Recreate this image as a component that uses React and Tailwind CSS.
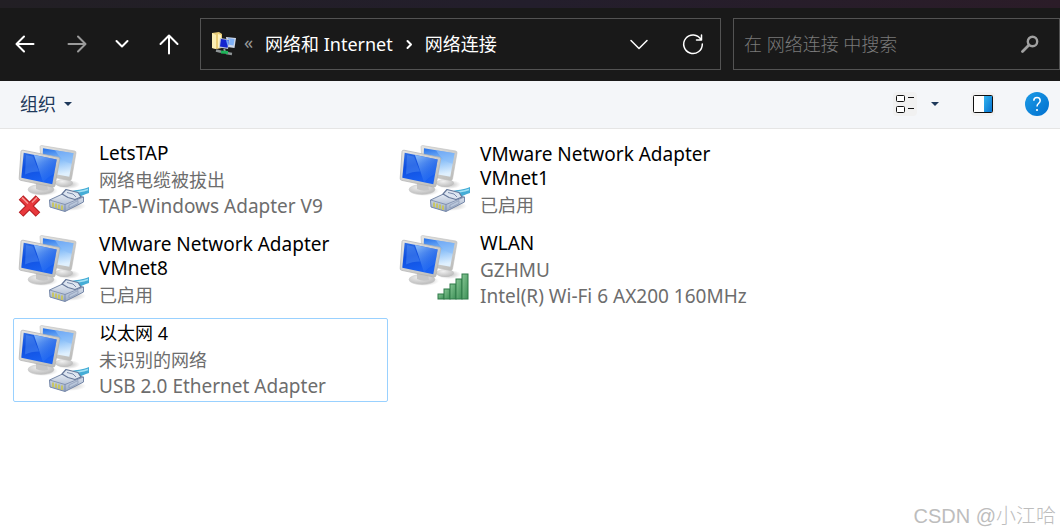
import { useState } from "react";

const connections = [
  { name: "LetsTAP", lines: ["网络电缆被拔出", "TAP-Windows Adapter V9"], badge: "cable", unplugged: true },
  { name: "VMware Network Adapter VMnet1", lines: ["已启用"], badge: "cable" },
  { name: "VMware Network Adapter VMnet8", lines: ["已启用"], badge: "cable" },
  { name: "WLAN", lines: ["GZHMU", "Intel(R) Wi-Fi 6 AX200 160MHz"], badge: "signal" },
  { name: "以太网 4", lines: ["未识别的网络", "USB 2.0 Ethernet Adapter"], badge: "cable" },
];

// Latin-only lines are set one pixel larger so they sit evenly beside the Chinese ones
const textSize = (text) => (/[\u4e00-\u9fff]/.test(text) ? "text-[18px]" : "text-[19px]");

// Gradients shared by every connection icon
function IconDefs() {
  return (
    <svg width="0" height="0" className="absolute" aria-hidden="true">
      <defs>
        <linearGradient id="screen" x1="0" y1="0" x2="0.3" y2="1">
          <stop offset="0" stopColor="#2f6fe6" />
          <stop offset="0.45" stopColor="#0f4fe0" />
          <stop offset="1" stopColor="#1a62f2" />
        </linearGradient>
        <linearGradient id="screenBack" x1="0" y1="0" x2="0.2" y2="1">
          <stop offset="0" stopColor="#2470ea" />
          <stop offset="0.5" stopColor="#86bdf8" />
          <stop offset="1" stopColor="#dff0fe" />
        </linearGradient>
        <linearGradient id="shine" x1="0" y1="0" x2="0.6" y2="1">
          <stop offset="0" stopColor="#9ccbfc" stopOpacity="0.9" />
          <stop offset="1" stopColor="#3f86f5" stopOpacity="0.1" />
        </linearGradient>
        <linearGradient id="frame" x1="0" y1="0" x2="1" y2="1">
          <stop offset="0" stopColor="#e6e6e4" />
          <stop offset="1" stopColor="#b9b9b7" />
        </linearGradient>
        <radialGradient id="base" cx="0.4" cy="0.3" r="0.8">
          <stop offset="0" stopColor="#f0f0f0" />
          <stop offset="1" stopColor="#b4b4b4" />
        </radialGradient>
        <radialGradient id="shadow">
          <stop offset="0" stopColor="#8a8a8a" stopOpacity="0.6" />
          <stop offset="1" stopColor="#8a8a8a" stopOpacity="0" />
        </radialGradient>
        <linearGradient id="bar" x1="0" y1="0" x2="1" y2="1">
          <stop offset="0" stopColor="#86c694" />
          <stop offset="1" stopColor="#3c8f56" />
        </linearGradient>
        <linearGradient id="plug" x1="0" y1="0" x2="0" y2="1">
          <stop offset="0" stopColor="#e6ecf5" />
          <stop offset="1" stopColor="#98a8c2" />
        </linearGradient>
        <linearGradient id="help" x1="0" y1="0" x2="1" y2="1">
          <stop offset="0" stopColor="#1c9be6" />
          <stop offset="1" stopColor="#0070cf" />
        </linearGradient>
        <linearGradient id="pane" x1="0" y1="0" x2="1" y2="1">
          <stop offset="0" stopColor="#33b4ef" />
          <stop offset="1" stopColor="#0672cf" />
        </linearGradient>
      </defs>
    </svg>
  );
}

function Cable() {
  return (
    <g strokeLinejoin="round">
      <ellipse cx="52" cy="63" rx="17" ry="5" fill="url(#shadow)" />
      <path d="M54 48.500c5-2.500 11-1 18-4.500v6c-4 1-8 3-12 5z" fill="#45add6" />
      <path d="M57 49.500c5-1 9-1 14-3" stroke="#a5e2f5" strokeWidth="1.500" fill="none" />
      <path d="M32.500 57l13-6 21 3v5l-18.500 9.500-15-4.500z" fill="url(#plug)" stroke="#7587a8" strokeWidth="1" />
      <path d="M32.500 57l15.500 4.500 18.500-7.500M48 61.500v6.500" stroke="#7587a8" strokeWidth="0.8" fill="none" />
      <path d="M45 51l4-4.500 12 3 3 4.500-6 2.500-7-2z" fill="#dde5f0" stroke="#66789a" strokeWidth="1.200" />
      <path d="M50 49.500l6 1.500 3 3" stroke="#6c7fa3" strokeWidth="0.9" fill="none" />
      <path d="M52 62l9-4.500v3l-9 4.500z" fill="#b9c6da" stroke="#7f90b0" strokeWidth="0.6" />
      <path d="M36 59.500v4.500M39 60.500v4.500M42 61.500v4.500M45 62.500v4.500" stroke="#c9c65c" strokeWidth="1.800" />
    </g>
  );
}

function Signal() {
  const bars = [[40, 61], [46, 56], [52, 51], [58, 46], [64, 41]];
  return (
    <g fill="url(#bar)" stroke="#2f7a48" strokeWidth="1">
      {bars.map(([x, y]) => (
        <rect key={x} x={x} y={y} width="6" height={66 - y} />
      ))}
    </g>
  );
}

function ConnectionIcon({ badge, unplugged }) {
  return (
    <svg viewBox="0 0 74 74" className="size-[74px] shrink-0" aria-hidden="true">
      {/* back monitor */}
      <ellipse cx="51" cy="41.500" rx="12" ry="4.500" fill="url(#shadow)" />
      <ellipse cx="47" cy="40" rx="9" ry="4" fill="url(#base)" />
      <path d="M23 3.700Q23.300 2.400 24.800 2.600L57.800 8Q59.300 8.400 59 10L54.500 36Q54 37.700 52.400 37.400L25 32z" fill="url(#frame)" stroke="#bdbdbd" strokeWidth="0.6" />
      <path d="M26 5.300l30.500 5-4.200 23.500-27.300-5z" fill="url(#screenBack)" />
      <path d="M38 7.300l18.500 3-1.800 10.500q-10-2-16.700-13.500z" fill="#8abdf8" opacity="0.6" />
      {/* front monitor */}
      <ellipse cx="26" cy="48" rx="15" ry="5" fill="url(#shadow)" />
      <ellipse cx="24" cy="46.500" rx="13" ry="5" fill="url(#base)" stroke="#c8c8c8" strokeWidth="0.5" />
      <path d="M19 39l11 2 1 6q-6 2-12-1z" fill="#c6c6c6" />
      <path d="M4 8.500Q4.300 7 6 7.200L41.500 14.300Q43 14.700 42.700 16.300L38 42.600Q37.600 44.300 35.800 44L3.500 37.300Q2 37 2.200 35.300z" fill="url(#frame)" stroke="#b0b0b0" strokeWidth="0.7" />
      <path d="M6.700 9.800l33 6.700-4.400 24.700-31-6.500z" fill="url(#screen)" />
      <path d="M17 11.900l22.700 4.600-2.600 14.500q-7 3-11 8.500z" fill="url(#shine)" />
      <path d="M9 12l7 1.500 6 15q-8 0-14 3z" fill="#6aa4f7" opacity="0.35" />
      {badge === "cable" ? <Cable /> : <Signal />}
      {unplugged && (
        <g strokeLinecap="butt">
          <path d="M4 54.500l17 17M21 54.500L4 71.500" stroke="#b51d22" strokeWidth="6.500" />
          <path d="M4.500 55l16 16M20.500 55l-16 16" stroke="#e8393d" strokeWidth="4.500" />
          <path d="M5 54.500l6 6M20 54.500l-5 5" stroke="#f59a96" strokeWidth="1.500" />
        </g>
      )}
    </svg>
  );
}

function FolderIcon() {
  return (
    <svg viewBox="0 0 24 24" className="size-6 shrink-0" aria-hidden="true">
      <path d="M0 1l7-1 3 2v14l-5 1-5-1z" fill="#e9cd78" />
      <path d="M0 1l4 2v14l-4-1z" fill="#fbeeb4" />
      <path d="M6 2l3 1v12l-3 1z" fill="#fff2bd" />
      <path d="M14 5l10 1-1.500 10-7-1z" fill="#cfd8e8" />
      <path d="M16 6l6.500 1-1 6.500-6-1z" fill="#7fb0f5" />
      <path d="M8 6l10 1.500-2 9.500-9-1.500z" fill="#b9c3d6" />
      <path d="M9 7l8 1.300-1.500 7.500L8 14.500z" fill="#1425cf" />
      <path d="M14 8l3 0.500-1.300 6z" fill="#6ea4fa" />
      <path d="M12 17l1 2" stroke="#9aa0a3" strokeWidth="2" />
      <path d="M4 18.500l5 1.200M14 21l6 1" stroke="#8e9496" strokeWidth="2.500" />
      <path d="M9 20l7 0.500" stroke="#1fb45a" strokeWidth="3" fill="none" />
    </svg>
  );
}

function Stroke({ d, className, width = 2 }) {
  return (
    <svg viewBox="0 0 24 24" className={className} fill="none" stroke="currentColor" strokeWidth={width} strokeLinecap="round" strokeLinejoin="round" aria-hidden="true">
      <path d={d} />
    </svg>
  );
}

function AddressBar() {
  return (
    <header className="flex h-[73px] items-center bg-[#191919] pb-0.5 text-white">
      <nav className="flex w-[200px] shrink-0 items-center">
        <button aria-label="后退" className="flex w-[50px] justify-center">
          <Stroke className="size-6" d="M20.500 12H4M11 4.500L3.500 12l7.500 7.500" />
        </button>
        <button aria-label="前进" className="flex w-[54px] justify-center text-[#9a9a9a]">
          <Stroke className="size-6" d="M3.500 12H20M13 4.500l7.500 7.500-7.500 7.500" />
        </button>
        <button aria-label="最近位置" className="flex w-9 justify-center">
          <Stroke className="size-6" d="M6.500 9l5.500 5.500L17.500 9" />
        </button>
        <button aria-label="上移" className="flex w-[58px] justify-center">
          <Stroke className="size-6" d="M12 21.500V4M3.500 12L12 3.500l8.500 8.500" />
        </button>
      </nav>
      <div className="flex h-[52px] min-w-0 flex-1 items-center border border-[#535353] pl-[11px]">
        <FolderIcon />
        <span className="ml-2 w-[21px] pb-1 text-lg leading-6 text-[#9a9a9a]">«</span>
        <a href="#network" className="whitespace-nowrap text-lg leading-6">网络和 Internet</a>
        <Stroke className="mx-1 size-6" d="M10.500 9l3.500 3.500-3.500 3.500" />
        <a href="#connections" className="whitespace-nowrap text-lg leading-6">网络连接</a>
        <button aria-label="历史记录" className="ml-auto">
          <Stroke className="size-6" width={1.5} d="M4 8.500l8 8 8-8" />
        </button>
        <button aria-label="刷新" className="mr-[15px] ml-[30px]">
          <Stroke className="size-6" width={1.5} d="M20 7.500A9.300 9.300 0 1 0 21.300 12M20.500 3v5H15.500" />
        </button>
      </div>
      <label className="ml-3 flex h-[52px] w-[327px] shrink-0 items-center border border-[#535353] px-2.5">
        <input
          type="text"
          aria-label="搜索"
          placeholder="在 网络连接 中搜索"
          className="min-w-0 flex-1 bg-transparent text-lg leading-6 font-light outline-none placeholder:text-[#7a7a7a]"
        />
        <svg viewBox="0 0 18 18" className="mr-2.5 size-[18px] text-[#a0a0a0]" fill="none" stroke="currentColor" aria-hidden="true">
          <circle cx="11.500" cy="6.500" r="4.700" strokeWidth="2.400" />
          <path d="M8 10l-6.500 6.500" strokeWidth="2.800" strokeLinecap="round" />
        </svg>
      </label>
    </header>
  );
}

function Toolbar() {
  return (
    <div className="flex h-12 items-center border-b border-[#e5e5e5] bg-[#f4f6f9] pr-[11px] pb-0.5 pl-5 text-[#1e395b]">
      <button className="flex items-center gap-2 text-lg leading-6">
        组织
        <svg viewBox="0 0 8 4" className="h-1 w-2" aria-hidden="true"><path d="M0 0h8L4 4z" fill="currentColor" /></svg>
      </button>
      <button aria-label="更改视图" className="ml-auto rounded-sm bg-[#f1f1f1]">
        <svg viewBox="0 0 24 24" className="size-6" fill="#fff" stroke="#111" strokeWidth="1" aria-hidden="true">
          <rect x="3.500" y="3.500" width="8" height="6" rx="1" />
          <rect x="3.500" y="14.500" width="8" height="6" rx="1" />
          <path d="M15 5.500h6M15 16.500h6" />
        </svg>
      </button>
      <button aria-label="更多选项" className="ml-3.5">
        <svg viewBox="0 0 8 4" className="h-1 w-2" aria-hidden="true"><path d="M0 0h8L4 4z" fill="currentColor" /></svg>
      </button>
      <button aria-label="显示预览窗格" className="ml-8 rounded-sm bg-[#f1f1f1]">
        <svg viewBox="0 0 24 24" className="size-6" aria-hidden="true">
          <rect x="2.500" y="3.500" width="19" height="17" rx="1" fill="#fff" />
          <path d="M13 4h8v16h-8z" fill="url(#pane)" />
          <rect x="2.500" y="3.500" width="19" height="17" rx="1" fill="none" stroke="#111" />
        </svg>
      </button>
      <button aria-label="帮助" className="ml-[30px]">
        <svg viewBox="0 0 24 24" className="size-6" fill="none" aria-hidden="true">
          <circle cx="12" cy="12" r="12" fill="url(#help)" />
          <path d="M8.800 8.800C8.800 4.500 15.200 4.500 15.200 8.800C15.200 11.200 12 11.500 12 14.500" stroke="#fff" strokeWidth="1.500" />
          <circle cx="12" cy="18" r="1.100" fill="#fff" />
        </svg>
      </button>
    </div>
  );
}

export default function App() {
  const [selected, setSelected] = useState("以太网 4");

  return (
    <div className="relative flex min-h-screen flex-col bg-white font-['Noto_Sans','Noto_Sans_CJK_SC',sans-serif]">
      <IconDefs />
      <div className="h-2 bg-linear-to-r from-[#221f24] via-[#231e2c] to-[#2b1c28]" />
      <AddressBar />
      <Toolbar />
      <main className="grid grid-cols-[repeat(auto-fill,375px)] gap-1.5 px-[13px] py-[9px]">
        {connections.map((item) => (
          <button
            key={item.name}
            onClick={() => setSelected(item.name)}
            className={`flex h-[84px] items-center rounded-xs border pl-[3px] text-left ${
              selected === item.name ? "border-[#99d1ff]" : "border-transparent"
            }`}
          >
            <ConnectionIcon badge={item.badge} unplugged={item.unplugged} />
            <span className="ml-2 block min-w-0">
              <span className={`mb-0.5 block max-w-[250px] leading-6 text-black ${textSize(item.name)}`}>
                {item.name}
              </span>
              {item.lines.map((line) => (
                <span key={line} className={`block leading-[26px] whitespace-nowrap text-[#6d6d6d] ${textSize(line)}`}>
                  {line}
                </span>
              ))}
            </span>
          </button>
        ))}
      </main>
      <p className="absolute right-1 bottom-1 font-['Liberation_Sans','Noto_Sans_CJK_SC',sans-serif] text-xl leading-6 font-light text-[#bdbdbd]">
        CSDN @小江哈
      </p>
    </div>
  );
}
